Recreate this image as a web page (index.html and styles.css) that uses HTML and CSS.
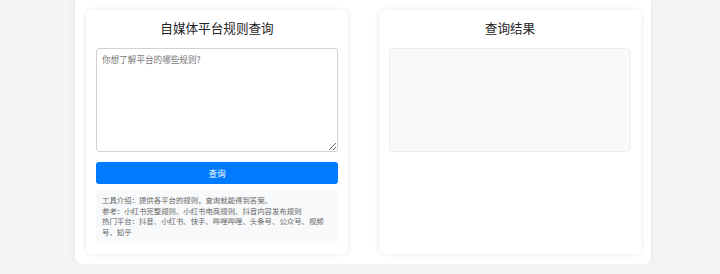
FILE: index.html
```html
<!DOCTYPE html>
<html lang="zh">
<head>
<meta charset="utf-8">
<title>自媒体平台规则查询</title>
<link rel="stylesheet" href="styles.css">
</head>
<body>
<div class="container">
  <div class="card">
    <h2 class="card-title">自媒体平台规则查询</h2>
    <textarea class="query-input" placeholder="你想了解平台的哪些规则?"></textarea>
    <button class="query-btn">查询</button>
    <div class="info">
      <p>工具介绍：提供各平台的规则，查询就能得到答案。</p>
      <p>参考：小红书完整规则、小红书电商规则、抖音内容发布规则</p>
      <p>热门平台：抖音、小红书、快手、哔哩哔哩、头条号、公众号、视频号、知乎</p>
    </div>
  </div>
  <div class="card">
    <h2 class="card-title">查询结果</h2>
    <div class="result"></div>
  </div>
</div>
</body>
</html>
```

FILE: styles.css
```css
html, body {
  margin: 0;
  padding: 0;
  background: #f5f5f5;
  font-family: "Noto Sans CJK SC", "Noto Sans", sans-serif;
  color: #333;
}

.container {
  margin-left: 75px;
  width: 576px;
  box-sizing: border-box;
  padding: 10px 10px 10px 11px;
  background: #fff;
  border-radius: 0 0 7px 7px;
  box-shadow: 0 0 8px rgba(0, 0, 0, 0.08);
  display: grid;
  grid-template-columns: 1fr 1fr;
  column-gap: 31px;
}

.card {
  background: #fff;
  border-radius: 5px;
  box-shadow: 0 0 5px rgba(0, 0, 0, 0.1);
  padding: 10px 10px 11px;
  display: flex;
  flex-direction: column;
}

.card-title {
  margin: 0 0 13px;
  font-size: 12.6px;
  line-height: 15px;
  font-weight: normal;
  text-align: center;
  color: #222;
}

.query-input {
  display: block;
  width: 100%;
  height: 104px;
  box-sizing: border-box;
  border: 1px solid #d2d2d2;
  border-radius: 3px;
  padding: 5px 5px;
  font-family: inherit;
  font-size: 8.6px;
  line-height: 11px;
  resize: vertical;
  margin: 0;
}

.query-input::placeholder {
  color: #777;
}

.query-btn {
  display: block;
  width: 100%;
  height: 22px;
  margin: 10px 0 0;
  border: none;
  border-radius: 3px;
  background: #007bff;
  color: #fff;
  font-family: inherit;
  font-size: 8.6px;
  padding: 0;
}

.info {
  margin-top: 6px;
  background: #f8f9fa;
  border-radius: 3px;
  padding: 5px 6px;
  font-size: 7.4px;
  line-height: 10.7px;
  color: #666;
}

.info p {
  margin: 0;
}

.result {
  height: 104px;
  box-sizing: border-box;
  background: #f9f9f9;
  border: 1px solid #eee;
  border-radius: 3px;
}
```
